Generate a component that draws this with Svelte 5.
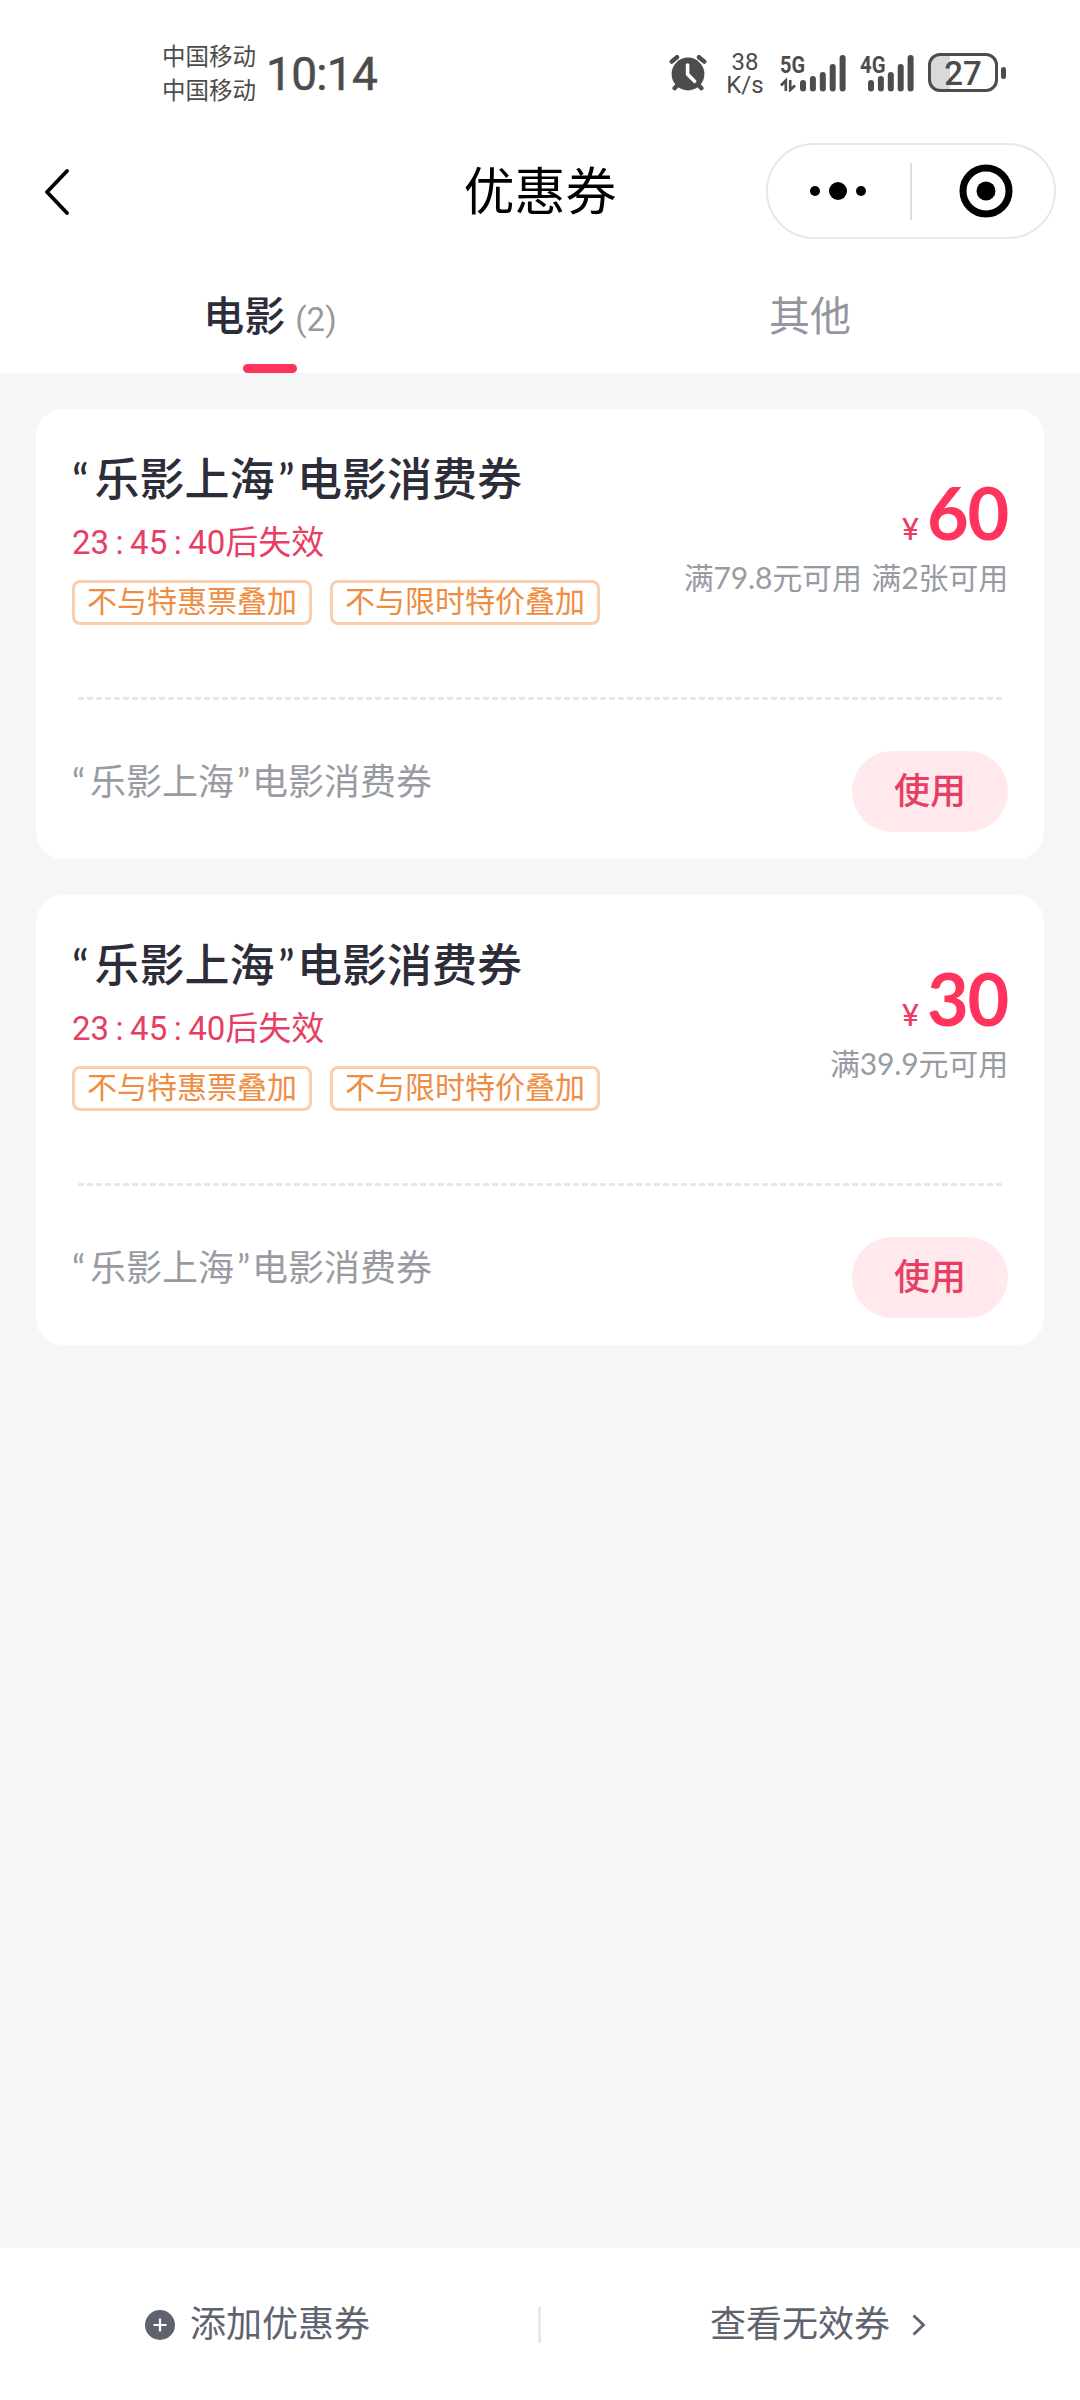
<script>
	const coupons = [
		{ id: 1, brand: '乐影上海', name: '电影消费券', left: ['23', '45', '40'], tags: ['不与特惠票叠加', '不与限时特价叠加'], amount: 60, rule: '满79.8元可用 满2张可用' },
		{ id: 2, brand: '乐影上海', name: '电影消费券', left: ['23', '45', '40'], tags: ['不与特惠票叠加', '不与限时特价叠加'], amount: 30, rule: '满39.9元可用' }
	];

	let activeTab = 'movie';
	const barTops = [26, 22, 18, 10, 1];
</script>

<div class="page">
	<header>
		<div class="status-bar">
			<div class="carriers">
				<span>中国移动</span>
				<span>中国移动</span>
			</div>
			<div class="clock">10:14</div>
			<div class="status-icons">
				<svg class="alarm" width="38" height="38" viewBox="0 0 38 38">
					<g stroke="#4c4c4c" stroke-width="4.4" stroke-linecap="round" fill="none">
						<path d="M2.7 7.6L8 3.2M35.3 7.6L30 3.2M8.6 31L5.6 34.2M29.4 31L32.4 34.2" />
					</g>
					<circle cx="19" cy="20" r="16.4" fill="#4c4c4c" />
					<path d="M18.6 11v9.3l7 7" fill="none" stroke="#fff" stroke-width="3.6" stroke-linecap="round" stroke-linejoin="round" />
				</svg>
				<div class="speed">38<br />K/s</div>
				<svg class="signal" width="66" height="48" viewBox="0 -10 66 48">
					<text x="0" y="18.5" textLength="25" lengthAdjust="spacingAndGlyphs">5G</text>
					<path d="M1 31.5L5.8 26.5V37M10.2 26V36L15 31.5" fill="none" stroke="#4c4c4c" stroke-width="2.6" />
					{#each barTops as top, i}
						<rect x={20 + i * 9.9} y={top} width="6" height={37.4 - top} rx="3" />
					{/each}
				</svg>
				<svg class="signal second" width="55" height="48" viewBox="0 -10 55 48">
					<text x="0" y="18.5" textLength="25.5" lengthAdjust="spacingAndGlyphs">4G</text>
					{#each barTops as top, i}
						<rect x={8 + i * 9.9} y={top} width="6" height={37.4 - top} rx="3" />
					{/each}
				</svg>
				<div class="battery"><span>27</span></div>
				<div class="battery-tip"></div>
			</div>
		</div>

		<div class="nav-bar">
			<button class="back" aria-label="返回">
				<svg width="30" height="50" viewBox="0 0 30 50">
					<path d="M25 4L5 25L25 46" fill="none" stroke="#000" stroke-width="3.8" stroke-linecap="round" stroke-linejoin="round" />
				</svg>
			</button>
			<h1>优惠券</h1>
			<div class="capsule">
				<svg width="58" height="20" viewBox="0 0 58 20">
					<circle cx="6" cy="10" r="5" />
					<circle cx="29" cy="10" r="9" />
					<circle cx="52" cy="10" r="5" />
				</svg>
				<i></i>
				<svg width="54" height="54" viewBox="0 0 54 54">
					<circle cx="27" cy="27" r="23" fill="none" stroke="#000" stroke-width="7" />
					<circle cx="27" cy="27" r="9.5" />
				</svg>
			</div>
		</div>

		<nav class="tabs">
			<button class:active={activeTab === 'movie'} onclick={() => (activeTab = 'movie')}>
				<span>电影</span><small>(2)</small>
			</button>
			<button class:active={activeTab === 'other'} onclick={() => (activeTab = 'other')}>
				<span>其他</span>
			</button>
		</nav>
	</header>

	<main>
		{#each coupons as coupon (coupon.id)}
			<section class="card">
				<div class="top">
					<div class="info">
						<h2><span class="quote">“</span>{coupon.brand}<span class="quote end">”</span>{coupon.name}</h2>
						<div class="expire">
							{#each coupon.left as part, i}{#if i > 0}<span class="colon">:</span>{/if}<span>{part}</span>{/each}<span>后失效</span>
						</div>
						<div class="tags">
							{#each coupon.tags as tag}
								<span class="tag">{tag}</span>
							{/each}
						</div>
					</div>
					<div class="value">
						<div class="price"><span class="yen">¥</span><span class="amount">{coupon.amount}</span></div>
						<div class="rule">{coupon.rule}</div>
					</div>
				</div>
				<div class="divider"></div>
				<div class="bottom">
					<p><span class="quote">“</span>{coupon.brand}<span class="quote end">”</span>{coupon.name}</p>
					<button class="use">使用</button>
				</div>
			</section>
		{/each}
	</main>

	<footer>
		<button class="add">
			<svg width="30" height="30" viewBox="0 0 30 30">
				<circle cx="15" cy="15" r="15" fill="#5f6370" />
				<path d="M8.5 15h13M15 8.5v13" stroke="#fff" stroke-width="2.2" />
			</svg>
			<span>添加优惠券</span>
		</button>
		<i></i>
		<button class="invalid">
			<span>查看无效券</span>
			<svg width="16" height="24" viewBox="0 0 16 24">
				<path d="M2.5 2.5L12.5 12L2.5 21.5" fill="none" stroke="#5f6370" stroke-width="2.8" />
			</svg>
		</button>
	</footer>
</div>

<style>
	:global(body) {
		margin: 0;
	}

	.page {
		width: 1080px;
		height: 2400px;
		display: flex;
		flex-direction: column;
		background: #f4f6f8;
		font-family: Roboto, 'Noto Sans CJK SC', sans-serif;
		overflow: hidden;
	}

	h1,
	h2,
	p {
		margin: 0;
	}

	svg {
		display: block;
		flex-shrink: 0;
	}

	button {
		padding: 0;
		border: 0;
		background: none;
		font-family: inherit;
		color: inherit;
	}

	header {
		height: 373px;
		background: #fff;
		flex-shrink: 0;
	}

	.status-bar {
		height: 130px;
		box-sizing: border-box;
		padding: 40px 74px 0 162px;
		display: flex;
		align-items: flex-start;
		color: #4c4c4c;
	}

	.carriers {
		display: flex;
		flex-direction: column;
		font-size: 23.5px;
		line-height: 34px;
	}

	.clock {
		margin: 7px 0 0 10px;
		font-size: 46px;
		line-height: 54px;
		letter-spacing: -0.7px;
		-webkit-text-stroke: 0.5px #4c4c4c;
	}

	.status-icons {
		display: flex;
		margin-left: auto;
		padding-top: 14px;
	}

	.speed {
		width: 42px;
		margin: -3px 14px 0 17px;
		text-align: center;
		font-size: 24px;
		line-height: 23px;
	}

	.signal {
		margin-top: -10px;
		fill: #4c4c4c;
	}

	.signal text {
		font-size: 24px;
		font-weight: 700;
	}

	.second {
		margin-left: 14px;
	}

	.battery {
		width: 64px;
		height: 33px;
		margin: -1px 0 0 13px;
		border: 3px solid #4c4c4c;
		border-radius: 12px;
		background: linear-gradient(to right, #d9d9d9 19px, #fff 19px);
		text-align: center;
		font-size: 33px;
		font-weight: 500;
		line-height: 35px;
	}

	.battery-tip {
		width: 5px;
		height: 12px;
		margin: 13px 0 0 3px;
		border-radius: 3px;
		background: #4c4c4c;
	}

	.nav-bar {
		height: 123px;
		display: grid;
		grid-template-columns: 290px 1fr 290px;
		align-items: center;
		padding: 0 24px 0 24px;
	}

	.back {
		padding-left: 18px;
		justify-self: start;
	}

	h1 {
		padding-top: 3px;
		text-align: center;
		font-size: 51px;
		font-weight: 400;
		line-height: 70px;
		color: #000;
	}

	.capsule {
		height: 92px;
		margin-top: -1px;
		border: 2px solid #e8e8e8;
		border-radius: 48px;
		display: flex;
		align-items: center;
		padding: 0 41px;
	}

	.capsule i {
		width: 2px;
		height: 57px;
		margin: 0 auto 0 43px;
		background: #dedede;
	}

	.tabs {
		height: 120px;
		display: grid;
		grid-template-columns: 1fr 1fr;
		color: #94969f;
	}

	.tabs button {
		position: relative;
		display: flex;
		justify-content: center;
		align-items: baseline;
		padding-top: 36px;
		font-size: 41px;
		line-height: 56px;
	}

	.tabs .active span {
		color: #2c2d38;
		font-weight: 500;
	}

	.tabs small {
		margin-left: 10px;
		font-size: 33px;
		color: #999;
	}

	.tabs .active::after {
		content: '';
		position: absolute;
		left: 243px;
		bottom: 0;
		width: 54px;
		height: 9px;
		border-radius: 5px;
		background: #ff335c;
	}

	main {
		flex: 1;
		padding: 36px;
		display: flex;
		flex-direction: column;
		gap: 36px;
	}

	.card {
		height: 450px;
		box-sizing: border-box;
		padding: 0 36px;
		border-radius: 27px;
		background: #fff;
	}

	.top {
		height: 288px;
		display: flex;
		justify-content: space-between;
	}

	h2 {
		margin-top: 41px;
		font-size: 45px;
		font-weight: 500;
		line-height: 62px;
		color: #2c2d38;
	}

	.quote {
		display: inline-block;
		width: 0.5em;
		font-family: Lato, sans-serif;
		line-height: 1;
	}

	.quote.end {
		text-indent: 0.08em;
	}

	.expire {
		display: flex;
		margin-top: 8px;
		font-size: 33px;
		line-height: 46px;
		color: #e73e63;
	}

	.colon {
		width: 21px;
		text-align: center;
	}

	.tags {
		display: flex;
		gap: 18px;
		margin-top: 14px;
	}

	.tag {
		height: 39px;
		padding: 0 12px;
		border: 3px solid #f8ceb0;
		border-radius: 8px;
		font-size: 30px;
		line-height: 37px;
		color: #ee8d42;
	}

	.value {
		display: flex;
		flex-direction: column;
		align-items: flex-end;
		padding-top: 64px;
	}

	.price {
		display: flex;
		align-items: baseline;
		height: 82px;
		color: #ff335c;
		line-height: 78px;
	}

	.yen {
		margin-right: 8px;
		font-size: 32px;
		color: #ec3c62;
	}

	.amount {
		font-family: Lato, sans-serif;
		font-size: 72px;
		font-weight: 700;
		letter-spacing: -1.2px;
	}

	.rule {
		font-family: Lato, 'Noto Sans CJK SC', sans-serif;
		font-size: 30px;
		line-height: 44px;
		letter-spacing: -0.15px;
		word-spacing: 2px;
		color: #999ba3;
	}

	.divider {
		height: 3px;
		margin: 0 6px;
		background: repeating-linear-gradient(to right, #e6e7e9 0 6px, #fff 6px 9px);
	}

	.bottom {
		display: flex;
		justify-content: space-between;
		padding-top: 51px;
	}

	p {
		margin-top: 7px;
		font-size: 36px;
		line-height: 50px;
		color: #999ba3;
	}

	.use {
		width: 156px;
		height: 81px;
		border-radius: 41px;
		background: #ffe9ed;
		color: #e73e63;
		font-size: 36px;
		font-weight: 500;
		line-height: 50px;
	}

	footer {
		height: 152px;
		display: grid;
		grid-template-columns: 538px 3px 1fr;
		background: #fff;
		color: #5f6370;
	}

	footer i {
		height: 36px;
		margin-top: 59px;
		background: #e8e9eb;
	}

	footer button {
		height: 154px;
		display: flex;
		align-items: center;
		font-size: 36px;
		line-height: 50px;
	}

	.add {
		padding-left: 145px;
		gap: 15px;
	}

	.invalid {
		padding-left: 169px;
		gap: 21px;
	}
</style>
